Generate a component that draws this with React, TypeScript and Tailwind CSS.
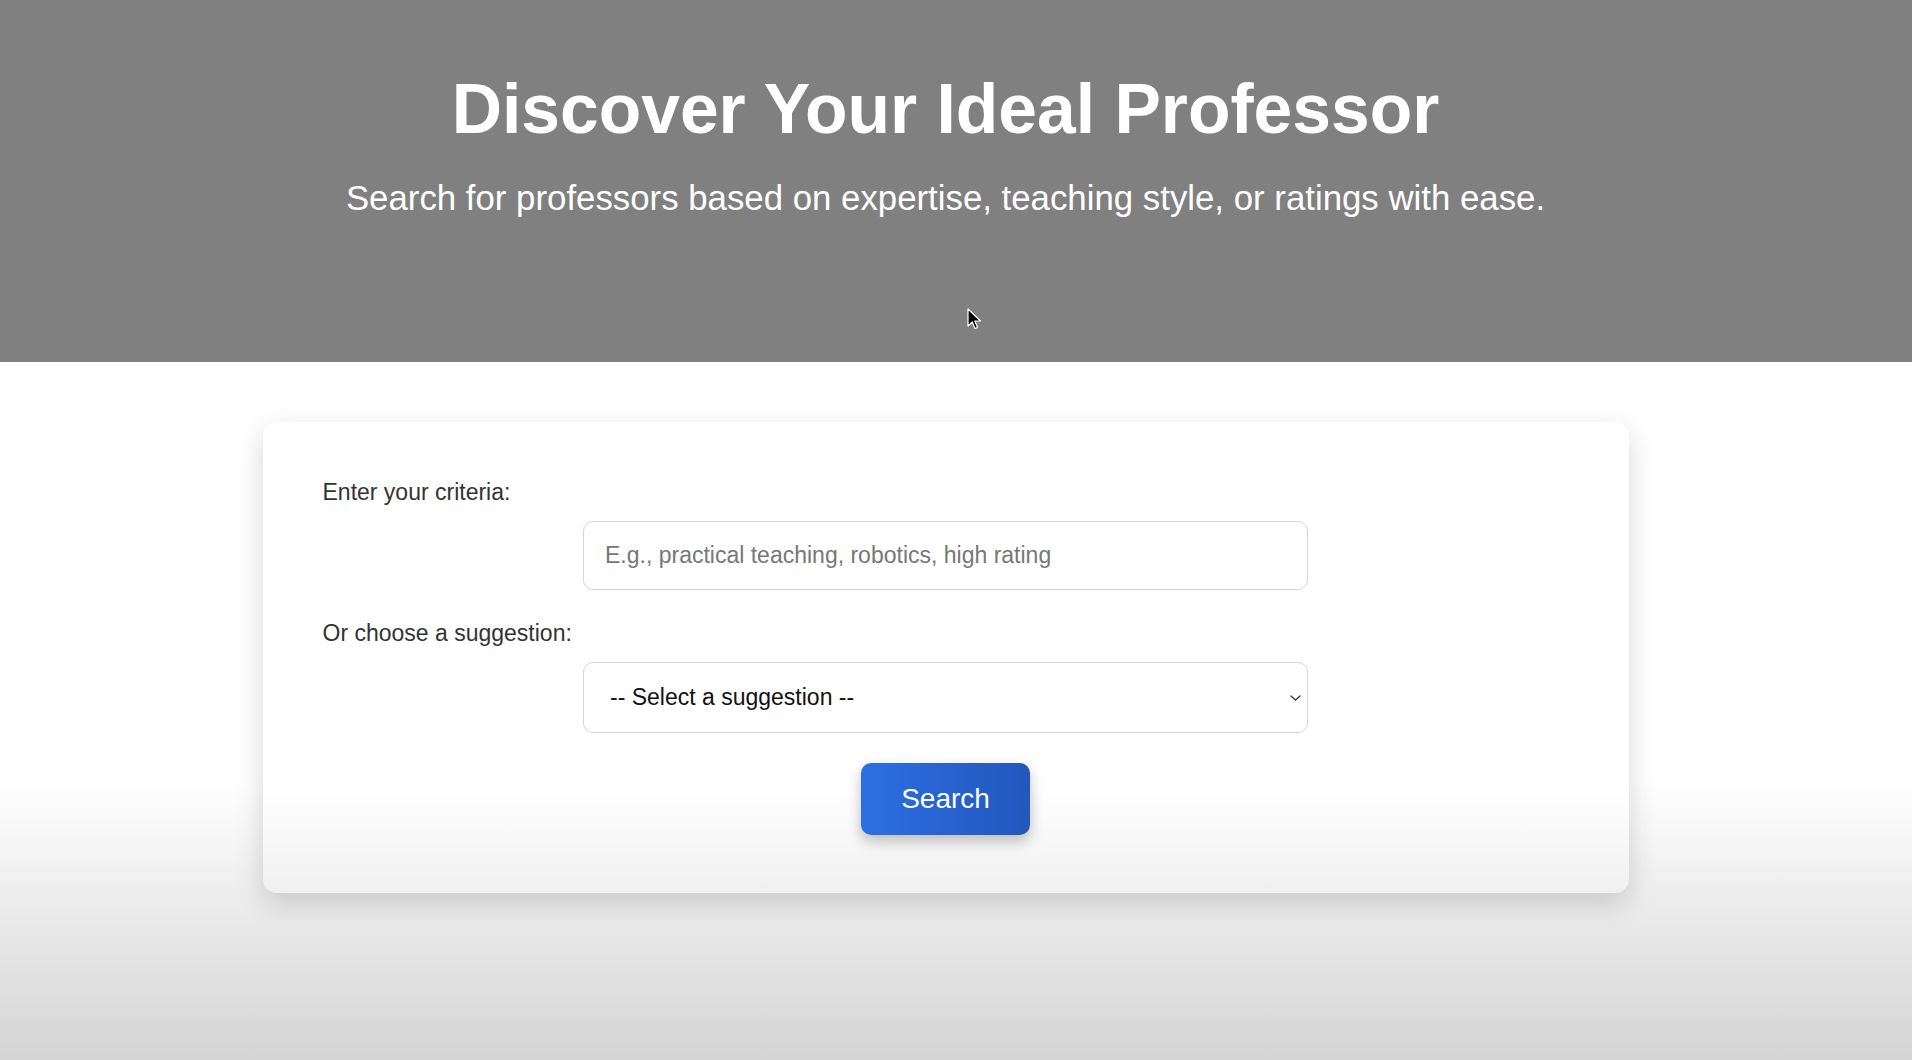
import { useState } from 'react';

const suggestions = [
  'Practical teaching',
  'Robotics research',
  'Highly rated',
  'Friendly and approachable',
];

export default function App() {
  const [query, setQuery] = useState<string>('');
  const [choice, setChoice] = useState<string>('');

  return (
    <div className="relative min-h-[1060px] w-full bg-white font-['Liberation_Sans',Arial,sans-serif]">
      {/* Hero */}
      <header className="h-[362px] bg-[#808080] pr-[21px] pt-[67px] text-center text-white">
        <h1 className="text-[69.6px] font-bold leading-[84px]">Discover Your Ideal Professor</h1>
        <p className="mt-[26px] text-[34.8px] leading-[42px]">
          Search for professors based on expertise, teaching style, or ratings with ease.
        </p>
      </header>

      {/* Search form */}
      <main className="h-[698px] bg-linear-to-b from-white from-60% to-[#d4d4d4] pr-[21px] pt-[60px]">
        <div className="mx-auto w-[1366px] rounded-[14px] bg-linear-to-b from-white from-78% to-[#f0f0f0] px-[60px] pb-[58px] pt-[56px] shadow-[0_10px_28px_rgba(0,0,0,0.16)]">
          <label className="block text-[23px] leading-[28px] text-[#333]">Enter your criteria:</label>
          <input
            type="text"
            value={query}
            onChange={(e) => setQuery(e.target.value)}
            placeholder="E.g., practical teaching, robotics, high rating"
            className="mx-auto mt-[15px] block h-[69px] w-[725px] rounded-[10px] border border-[#d6d6d6] bg-white px-[21px] text-[23px] text-[#222] outline-none placeholder:text-[#777]"
          />

          <label className="mt-[29px] block text-[23px] leading-[28px] text-[#333]">Or choose a suggestion:</label>
          <div className="relative mx-auto mt-[15px] h-[71px] w-[725px]">
            <select
              value={choice}
              onChange={(e) => setChoice(e.target.value)}
              className="h-full w-full appearance-none rounded-[10px] border border-[#d6d6d6] bg-white px-[26px] text-[23px] text-[#111] outline-none"
            >
              <option value="">-- Select a suggestion --</option>
              {suggestions.map((s) => (
                <option key={s} value={s}>
                  {s}
                </option>
              ))}
            </select>
            <svg
              className="pointer-events-none absolute right-[7px] top-1/2 -translate-y-1/2"
              width="11"
              height="7"
              viewBox="0 0 11 7"
              fill="none"
            >
              <path d="M1 1.5l4.5 4 4.5-4" stroke="#333" strokeWidth="1.3" strokeLinecap="round" strokeLinejoin="round" />
            </svg>
          </div>

          <button className="mx-auto mt-[30px] block h-[72px] w-[169px] rounded-[10px] bg-linear-to-r from-[#2c6fe3] to-[#2357bd] text-[28px] text-white shadow-[0_6px_14px_rgba(0,0,0,0.25)]">
            Search
          </button>
        </div>
      </main>

      {/* Mouse pointer captured in the shot */}
      <svg className="absolute left-[967px] top-[308px]" width="15" height="22" viewBox="0 0 15 22">
        <path d="M1 1v17l4.2-4 2.8 6.5 2.6-1.1-2.8-6.4H13.5z" fill="#000" stroke="#fff" strokeWidth="1.2" strokeLinejoin="round" />
      </svg>
    </div>
  );
}
